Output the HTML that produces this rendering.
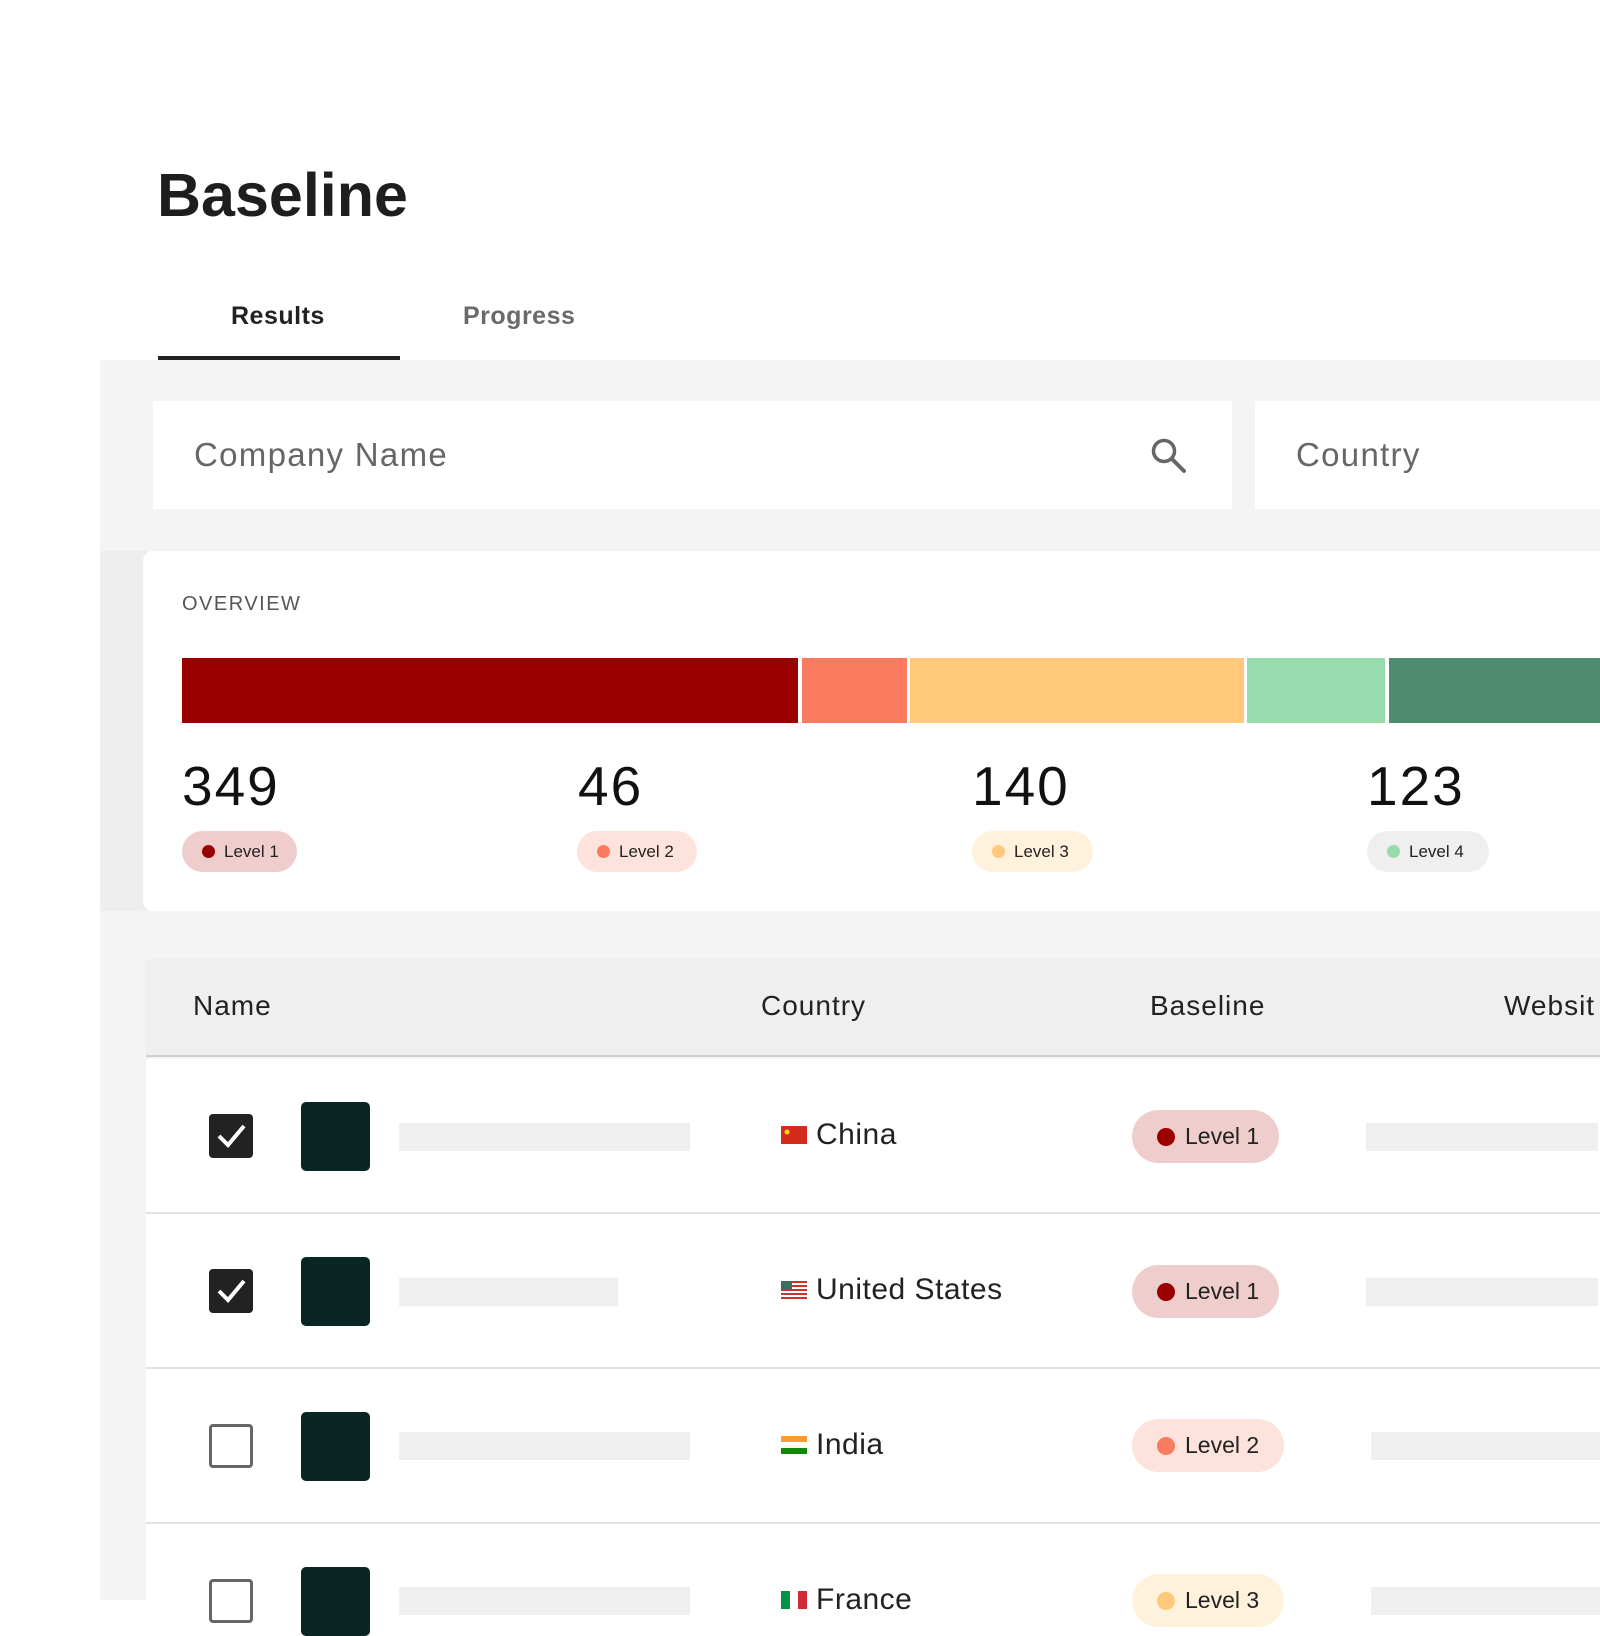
<!DOCTYPE html>
<html><head><meta charset="utf-8"><style>
*{margin:0;padding:0;box-sizing:border-box}
body{width:1600px;height:1600px;background:#fff;position:relative;overflow:hidden;font-family:"Liberation Sans",sans-serif;color:#222}
.a{position:absolute}
.pill{position:absolute;border-radius:30px;display:flex;align-items:center;color:#222}
.pill i{display:block;border-radius:50%}
.sm{height:41px;font-size:17px;padding-left:20px}
.sm i{width:13px;height:13px;margin-right:9px}
.lg{height:53px;font-size:23px;padding-left:25px}
.lg i{width:18px;height:18px;margin-right:10px}
.num{position:absolute;top:754px;font-size:55px;color:#111;letter-spacing:2px}
.th{position:absolute;top:990px;font-size:28px;color:#222;letter-spacing:1px}
.cb{position:absolute;left:209px;width:44px;height:44px;border-radius:4px;background:#222}
.cbe{position:absolute;left:209px;width:44px;height:44px;border-radius:4px;border:3px solid #666;background:#fff}
.sq{position:absolute;left:301px;width:69px;height:69px;border-radius:5px;background:#092624}
.bar{position:absolute;height:28px;background:#efefef}
.sep{position:absolute;left:146px;right:0;height:2px;background:#e2e2e2}
.ct{position:absolute;left:781px;font-size:30px;color:#222;display:flex;align-items:center;letter-spacing:0.5px}
.ct svg{margin-right:9px}
</style></head><body>
<div class="a" style="left:157px;top:160px;font-size:61px;font-weight:bold;color:#1e1e1e">Baseline</div>
<div class="a" style="left:231px;top:302px;font-size:25px;font-weight:bold;color:#222;letter-spacing:0.5px">Results</div>
<div class="a" style="left:463px;top:302px;font-size:25px;font-weight:bold;color:#6a6a6a;letter-spacing:0.5px">Progress</div>
<div class="a" style="left:158px;top:356px;width:242px;height:4px;background:#222"></div>
<div class="a" style="left:100px;top:360px;right:0;bottom:0;background:#f4f4f4"></div>
<div class="a" style="left:153px;top:401px;width:1079px;height:108px;background:#fff"></div>
<div class="a" style="left:194px;top:436px;font-size:33px;color:#666;letter-spacing:1.3px">Company Name</div>
<svg class="a" style="left:1150px;top:437px" width="38" height="38" viewBox="0 0 38 38"><circle cx="14" cy="14" r="10.5" fill="none" stroke="#666" stroke-width="3.5"/><path d="M22 22 L34 34" stroke="#666" stroke-width="4" stroke-linecap="round"/></svg>
<div class="a" style="left:1255px;top:401px;right:0;height:108px;background:#fff"></div>
<div class="a" style="left:1296px;top:436px;font-size:33px;color:#666;letter-spacing:1.3px">Country</div>
<div class="a" style="left:100px;top:551px;width:50px;height:360px;background:#eeeeee"></div>
<div class="a" style="left:143px;top:551px;right:0;height:360px;background:#fff;border-radius:10px 0 0 10px"></div>
<div class="a" style="left:182px;top:593px;font-size:20px;color:#555;letter-spacing:1.5px">OVERVIEW</div>
<div class="a" style="left:182px;top:658px;width:616px;height:65px;background:#9b0000"></div>
<div class="a" style="left:802px;top:658px;width:105px;height:65px;background:#fa7b5f"></div>
<div class="a" style="left:910px;top:658px;width:334px;height:65px;background:#ffc87a"></div>
<div class="a" style="left:1247px;top:658px;width:138px;height:65px;background:#98dbac"></div>
<div class="a" style="left:1389px;top:658px;right:0;height:65px;background:#4e8c71"></div>
<div class="num" style="left:182px">349</div>
<div class="num" style="left:578px">46</div>
<div class="num" style="left:972px">140</div>
<div class="num" style="left:1367px">123</div>
<div class="pill sm" style="left:182px;top:831px;width:115px;background:#efcdcd"><i style="background:#9b0000"></i>Level 1</div>
<div class="pill sm" style="left:577px;top:831px;width:120px;background:#fde3dc"><i style="background:#fa7b5f"></i>Level 2</div>
<div class="pill sm" style="left:972px;top:831px;width:121px;background:#fff2dd"><i style="background:#ffc87a"></i>Level 3</div>
<div class="pill sm" style="left:1367px;top:831px;width:122px;background:#efefef"><i style="background:#98dbac"></i>Level 4</div>
<div class="a" style="left:146px;top:959px;right:0;height:98px;background:#efefef;border-bottom:2px solid #d0d0d0"></div>
<div class="th" style="left:193px">Name</div>
<div class="th" style="left:761px">Country</div>
<div class="th" style="left:1150px">Baseline</div>
<div class="th" style="left:1504px">Websit</div>
<div class="a" style="left:146px;top:1059px;right:0;bottom:0;background:#fff"></div>
<div class="sep" style="top:1212px"></div><div class="sep" style="top:1367px"></div><div class="sep" style="top:1522px"></div>
<div class="cb" style="top:1114px"><svg width="44" height="44"><path d="M10 22 L19 31 L35 12" fill="none" stroke="#fff" stroke-width="4"/></svg></div>
<div class="sq" style="top:1102px"></div>
<div class="bar" style="left:399px;top:1123px;width:291px"></div>
<div class="ct" style="top:1118px"><svg width="26" height="18"><rect width="26" height="18" fill="#d52b1e"/><circle cx="6" cy="6" r="2.5" fill="#ffde00"/></svg>China</div>
<div class="pill lg" style="left:1132px;top:1110px;width:147px;background:#efcdcd"><i style="background:#9b0000"></i>Level 1</div>
<div class="bar" style="left:1366px;top:1123px;width:232px"></div>
<div class="cb" style="top:1269px"><svg width="44" height="44"><path d="M10 22 L19 31 L35 12" fill="none" stroke="#fff" stroke-width="4"/></svg></div>
<div class="sq" style="top:1257px"></div>
<div class="bar" style="left:399px;top:1278px;width:219px"></div>
<div class="ct" style="top:1273px"><svg width="26" height="18"><rect width="26" height="18" fill="#fff"/><path d="M0 1h26M0 5h26M0 9h26M0 13h26M0 17h26" stroke="#c33" stroke-width="2"/><rect width="11" height="9" fill="#3c6e5a"/></svg>United States</div>
<div class="pill lg" style="left:1132px;top:1265px;width:147px;background:#efcdcd"><i style="background:#9b0000"></i>Level 1</div>
<div class="bar" style="left:1366px;top:1278px;width:232px"></div>
<div class="cbe" style="top:1424px"></div>
<div class="sq" style="top:1412px"></div>
<div class="bar" style="left:399px;top:1432px;width:291px"></div>
<div class="ct" style="top:1428px"><svg width="26" height="18"><rect width="26" height="6" fill="#f93"/><rect y="6" width="26" height="6" fill="#fff"/><rect y="12" width="26" height="6" fill="#138808"/></svg>India</div>
<div class="pill lg" style="left:1132px;top:1419px;width:152px;background:#fde3dc"><i style="background:#fa7b5f"></i>Level 2</div>
<div class="bar" style="left:1371px;top:1432px;width:229px"></div>
<div class="cbe" style="top:1579px"></div>
<div class="sq" style="top:1567px"></div>
<div class="bar" style="left:399px;top:1587px;width:291px"></div>
<div class="ct" style="top:1583px"><svg width="26" height="18"><rect width="9" height="18" fill="#009246"/><rect x="9" width="8" height="18" fill="#fff"/><rect x="17" width="9" height="18" fill="#ce2b37"/></svg>France</div>
<div class="pill lg" style="left:1132px;top:1574px;width:152px;background:#fff2dd"><i style="background:#ffc87a"></i>Level 3</div>
<div class="bar" style="left:1371px;top:1587px;width:229px"></div>
</body></html>
